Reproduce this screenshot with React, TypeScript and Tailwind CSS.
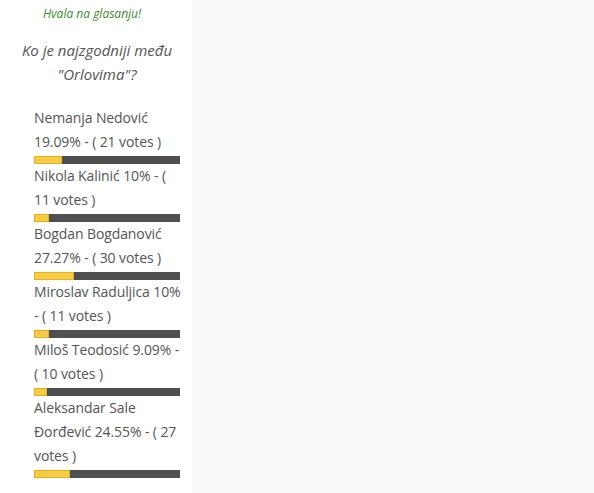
const answers = [
  { label: 'Nemanja Nedović 19.09% - ( 21 votes )', pct: 19.09, lines: ['Nemanja Nedović', '19.09% - ( 21 votes )'] },
  { label: 'Nikola Kalinić 10% - ( 11 votes )', pct: 10, lines: ['Nikola Kalinić 10% - (', '11 votes )'] },
  { label: 'Bogdan Bogdanović 27.27% - ( 30 votes )', pct: 27.27, lines: ['Bogdan Bogdanović', '27.27% - ( 30 votes )'] },
  { label: 'Miroslav Raduljica 10% - ( 11 votes )', pct: 10, lines: ['Miroslav Raduljica 10%', '- ( 11 votes )'] },
  { label: 'Miloš Teodosić 9.09% - ( 10 votes )', pct: 9.09, lines: ['Miloš Teodosić 9.09% -', '( 10 votes )'] },
  { label: 'Aleksandar Sale Đorđević 24.55% - ( 27 votes )', pct: 24.55, lines: ['Aleksandar Sale', 'Đorđević 24.55% - ( 27', 'votes )'] },
];

export default function App() {
  return (
    <div className="flex h-[493px] w-[594px] overflow-hidden bg-[#f9f9f9] font-['Open_Sans',sans-serif]">
      <div className="w-[192px] shrink-0 bg-white">
        <p className="mt-[4px] text-center text-[12px] leading-[20px] italic text-[#3d8b2f] pr-[8px]">
          Hvala na glasanju!
        </p>
        <h3 className="mt-[14px] text-center text-[15px] leading-[24px] italic text-[#555] pl-[2px]">
          Ko je najzgodniji među
          <br />
          "Orlovima"?
        </h3>
        <ul className="mt-[20px] pl-[34px] pr-[12px]">
          {answers.map((a) => (
            <li key={a.label} className="text-[14px] leading-[24px] text-[#555] tracking-[-0.1px]">
              {a.lines.map((l) => (
                <div key={l} className="whitespace-nowrap">{l}</div>
              ))}
              <div className="mt-[2px] flex h-[8px] bg-[#4f4f4f]">
                <div
                  className="h-full border border-[#e4b21e] bg-[#f7cc45]"
                  style={{ width: `${a.pct}%` }}
                />
              </div>
            </li>
          ))}
        </ul>
      </div>
    </div>
  );
}
